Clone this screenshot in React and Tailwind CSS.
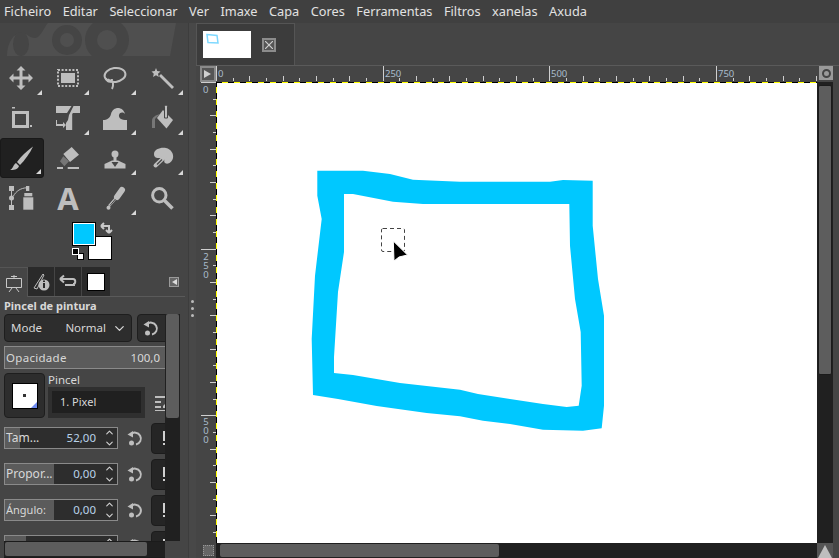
import React from "react";
import { ChevronDown, ChevronUp } from "lucide-react";

const MENU = ["Ficheiro", "Editar", "Seleccionar", "Ver", "Imaxe", "Capa", "Cores", "Ferramentas", "Filtros", "xanelas", "Axuda"];
const ICON = "#bebebe";

const Corner = () => (
  <svg width="5" height="5" viewBox="0 0 5 5" className="absolute right-[2px] bottom-[3px]">
    <path d="M5 0V5H0Z" fill="#d8d8d8" />
  </svg>
);

// toolbox glyphs, all drawn on a 26x26 box
const tools = [
  { c: 1, d: <path d="M13 1l4.500 4.500H14.500V11.500H20.500V8.500L25 13l-4.500 4.500V14.500H14.500V20.500H17.500L13 25l-4.500-4.500H11.500V14.500H5.500V17.500L1 13l4.500-4.500V11.500H11.500V5.500H8.500z" fill={ICON} /> },
  { c: 1, d: <><rect x="6" y="8" width="14" height="10" fill={ICON} /><rect x="3" y="5" width="20" height="16" fill="none" stroke={ICON} strokeWidth="2" strokeDasharray="2 1.600" /></> },
  { c: 1, d: <g fill="none" stroke={ICON} strokeWidth="2"><ellipse cx="13" cy="10" rx="10.500" ry="7" transform="rotate(-8 13 10)" /><path d="M4 13c0 3 3 4 5 3s3 4 1 8M6 14c1 2 4 2 4 0" /></g> },
  { c: 1, d: <g fill={ICON}><path d="M12 9l13 13-2 2L10 11z" /><path d="M7 3l1.200 3 3.300 .500-2.500 2.200 .800 3.300L7 10.300 4 12l.800-3.300L2.500 6.500 5.800 6z" /></g> },
  { c: 0, d: <g><rect x="5.500" y="7.500" width="14" height="14" fill="none" stroke={ICON} strokeWidth="3" /><path d="M4 2h3v1.500H4zM22 20h2v2h-2z" fill={ICON} /></g> },
  { c: 1, d: <g fill={ICON}><path d="M1 1h15.500L12 8H1zM18.500 1H25v7h-7l-.800 1v16H11v-7l2-3 1-5z" /><path d="M2 15v4h6v-2l3 3-3 3v-2H1v-6z" /></g> },
  { c: 1, d: <path d="M1 25V15C5 15 8 13 9 9C10 5 13 3 16 3C19 3 22 5 23 9C21 7 18 7 17 10C16.500 13 19 15 25 15V25Z" fill={ICON} /> },
  { c: 1, d: <g><path d="M3 23V16c0-4 4-6 8-7l-5 5v9z" fill="#777" /><path d="M8 13L14 5l10 10-6.500 8.500z" fill={ICON} /><path d="M15.500 1.500a1.500 1.500 0 0 1 3 0V13h-3z" fill={ICON} stroke="#454545" /></g> },
  { c: 1, active: true, d: <g fill={ICON}><path d="M25 1.500C22 8 17 15 12 20L9 17C13 11 19 6 25 1.500Z" /><path d="M8 18L11 21C10 25 5 25 2 25C5 24 5 20 8 18Z" /></g> },
  { c: 0, d: <g fill={ICON}><path d="M16.700 2L24 9.700 15 17 8.300 9z" /><path d="M8.300 11.300L14 16.300 9.300 21.300 5 16.300z" fill="#777" /><rect x="2" y="22" width="6" height="2" /><rect x="12.700" y="22" width="11.300" height="2" /></g> },
  { c: 1, d: <g fill={ICON}><circle cx="13" cy="9" r="3.500" /><rect x="11.500" y="10" width="3" height="6" /><path d="M2.500 23.500V19L10 15.500H16L23.500 19V23.500Z" /><path d="M9.500 17H16.500L13 22Z" fill="#454545" /></g> },
  { c: 1, d: <g><path d="M5 9C5 4 12 2 17 3C22 4 25 9 24 13C23 17 19 20 16 18C14 16 17 14 14 13C10 13 5 14 5 9Z" fill={ICON} /><path d="M15 12.500L6.500 20.500" stroke={ICON} strokeWidth="4" strokeLinecap="round" /><path d="M13 14.500L8 19.500" stroke="#454545" strokeWidth="1.200" /></g> },
  { c: 0, d: <g fill={ICON}><rect x="1" y="1" width="5" height="5" /><rect x="1" y="10.500" width="5" height="5" rx="2.500" /><rect x="1" y="20" width="5" height="5" /><rect x="3" y="5" width="1" height="16" /><rect x="18" y="1" width="3.300" height="5" /><rect x="16.300" y="8" width="8" height="3.300" /><rect x="15.300" y="12.300" width="10" height="12.400" /><path d="M5.300 11.300C8 6 13 3 18.700 2.800" fill="none" stroke={ICON} /></g> },
  { c: 0, text: "A" },
  { c: 1, d: <g><path d="M15 12L20 5" stroke={ICON} strokeWidth="6" strokeLinecap="round" /><path d="M14 13L7 21" stroke={ICON} strokeWidth="2.500" fill="none" /><path d="M13.500 14L8 20.500" stroke="#454545" /><circle cx="6.500" cy="22.700" r="2" fill={ICON} /></g> },
  { c: 0, d: <g fill="none" stroke={ICON}><circle cx="10.300" cy="10.300" r="6.700" strokeWidth="3" /><path d="M15.500 15.500L23.500 23.500" strokeWidth="3.500" /></g> },
];

const Reset = ({ className = "" }) => (
  <svg width="16" height="16" viewBox="0 0 16 16" className={className}>
    <path d="M3.500 4.500A6 6 0 1 1 9 14.500" fill="none" stroke={ICON} strokeWidth="2" />
    <path d="M0.500 4.500L6 1V7.500Z" fill={ICON} />
    <circle cx="4.500" cy="13" r="2.500" fill={ICON} />
  </svg>
);

const Slider = ({ label, value, fill, labelSize }) => (
  <div className="flex items-center h-[36px] shrink-0 w-[190px]">
    <div className="relative ml-[4px] w-[114px] h-[22px] border border-[#8a8a8a] bg-[#2d2d2d] flex items-center text-[#d8d8d8]">
      <div className={`h-full ${fill} bg-[#5b5b5b]`} />
      <span className={`absolute left-[1px] ${labelSize}`}>{label}</span>
      <span className="absolute right-[21px] text-[11.500px] text-[#b9d3ea]">{value}</span>
      <div className="absolute right-[2px] top-[-1px] flex flex-col text-[#d0d0d0]">
        <ChevronUp size={11} strokeWidth={2.5} />
        <ChevronDown size={11} strokeWidth={2.5} />
      </div>
    </div>
    <Reset className="ml-[9px]" />
    <div className="ml-[8px] w-[28px] h-[31px] rounded-[4px] bg-[#252525] border border-[#1c1c1c] flex flex-col items-start pl-[11px] pt-[7px] gap-[2px]">
      <div className="w-[2px] h-[10px] bg-[#d0d0d0]" />
      <div className="w-[2px] h-[2px] bg-[#d0d0d0]" />
    </div>
  </div>
);

const Toolbox = () => (
  <div className="grid grid-cols-[repeat(4,47px)] auto-rows-[40px]">
    {tools.map((t, i) => (
      <div
        key={i}
        className={`relative flex items-center justify-center w-[44px] pr-[2px] ${t.active ? "bg-[#202020] rounded-[3px] border border-[#191919]" : ""}`}
      >
        {t.text ? (
          <span className="text-[31px] font-bold leading-none text-[#bebebe]">{t.text}</span>
        ) : (
          <svg width="26" height="26" viewBox="0 0 26 26">{t.d}</svg>
        )}
        {t.c === 1 && <Corner />}
      </div>
    ))}
  </div>
);

const Colors = () => (
  <div className="flex justify-center pr-[2px] h-[49px]">
    <svg width="42" height="40" viewBox="0 0 42 40" className="mt-[4px] overflow-visible">
      <rect x="16.500" y="14.500" width="23" height="23" fill="#fff" stroke="#000" />
      <rect x="0.500" y="0.500" width="23" height="23" fill="#00c8ff" stroke="#000" />
      <rect x="1.500" y="1.500" width="21" height="21" fill="none" stroke="#fff" />
      <path d="M29 4h8v7M29 4l3-3M29 4l3 3M37 11l-3-3M37 11l3-3" fill="none" stroke="#c8c8c8" strokeWidth="2" />
      <rect x="5.500" y="31.500" width="6" height="6" fill="#fff" stroke="#000" />
      <rect x="0.500" y="26.500" width="6" height="6" fill="#000" stroke="#fff" />
    </svg>
  </div>
);

const DockTabs = () => (
  <div className="flex h-[29px] items-stretch relative">
    <div className="w-[28px] border-t border-r border-[#555] flex items-center justify-center -mb-px bg-[#454545] z-10">
      <svg width="18" height="18" viewBox="0 0 18 18" fill="none" stroke="#c8c8c8">
        <path d="M1.500 4.500h15v9h-15zM9 1v3M4 18l3-4M14 18l-3-4M6 2.500h6" />
      </svg>
    </div>
    <div className="w-[26px] bg-[#2a2a2a] flex items-center justify-center">
      <svg width="20" height="18" viewBox="0 0 20 18">
        <path d="M3 15L12 1l1 1-7 14z" fill="none" stroke="#bebebe" />
        <circle cx="13" cy="12" r="5.500" fill="#bebebe" />
        <rect x="12" y="10" width="2" height="5" fill="#2a2a2a" />
        <rect x="12" y="7.500" width="2" height="1.500" fill="#2a2a2a" />
      </svg>
    </div>
    <div className="w-[26px] ml-px bg-[#2a2a2a] flex items-center justify-center">
      <svg width="18" height="16" viewBox="0 0 18 16" fill="none" stroke="#bebebe" strokeWidth="2">
        <path d="M1 5h13c3 0 3 5 0 5M1 5l4-3.500M1 5l4 3.500M16 11H6" />
      </svg>
    </div>
    <div className="w-[28px] ml-px bg-[#2a2a2a] flex items-center justify-center">
      <div className="w-[18px] h-[18px] bg-white border border-black" />
    </div>
    <div className="flex-1 flex items-center justify-end pr-[9px]">
      <div className="w-[10px] h-[10px] border border-[#9a9a9a] flex items-center justify-center bg-[#666]">
        <div className="w-0 h-0 border-y-[3px] border-y-transparent border-r-[5px] border-r-[#ddd]" />
      </div>
    </div>
  </div>
);

const ToolOptions = () => (
  <div className="relative flex-1 min-h-0 border-t border-[#5a5a5a] mr-[3px] overflow-hidden">
    <div className="w-[165px] overflow-hidden h-full">
      <div className="text-[11px] font-bold text-[#d8d8d8] pl-[4px] pt-[1px] h-[17px] leading-[16px]">Pincel de pintura</div>
      <div className="flex w-[190px] pl-[4px] h-[28px] shrink-0">
        <div className="w-[128px] rounded-[4px] bg-[#2d2d2d] border border-[#1e1e1e] flex items-center justify-between pl-[6px] pr-[4px] text-[11.500px] text-[#d8d8d8]">
          <span>Mode</span>
          <span className="flex items-center gap-[6px]">Normal <ChevronDown size={15} strokeWidth={2} /></span>
        </div>
        <div className="ml-[5px] w-[46px] rounded-[4px] bg-[#2d2d2d] border border-[#1e1e1e] flex items-center pl-[5px]"><Reset /></div>
      </div>
      <div className="mt-[4px] ml-[4px] w-[170px] h-[23px] border border-[#8a8a8a] bg-[#5b5b5b] flex items-center justify-between pl-[1px] pr-[13px] text-[#d8d8d8]">
        <span className="text-[11.500px] tracking-[0.3px]">Opacidade</span>
        <span className="text-[11.500px]">100,0</span>
      </div>
      <div className="flex mt-[4px] pl-[4px] h-[46px] w-[190px]">
        <div className="w-[41px] h-[45px] rounded-[4px] bg-[#2d2d2d] border border-[#1e1e1e] flex items-center justify-center">
          <div className="relative w-[26px] h-[26px] bg-white border border-black flex items-center justify-center overflow-hidden">
            <div className="w-[3px] h-[3px] bg-[#333]" />
            <div className="absolute right-0 bottom-0 w-0 h-0 border-l-[6px] border-l-transparent border-b-[6px] border-b-[#6f8cf0]" />
          </div>
        </div>
        <div className="ml-[3px] w-[97px]">
          <div className="text-[11.500px] text-[#d8d8d8] leading-[14px] h-[14px]">Pincel</div>
          <div className="bg-[#2f2f2f] h-[31px] px-[4px] py-[4px]">
            <div className="bg-[#202020] h-[22px] text-[11px] text-[#d8d8d8] pl-[8px] leading-[21px]">1. Pixel</div>
          </div>
        </div>
        <svg width="16" height="16" viewBox="0 0 16 16" className="ml-[10px] mt-[22px]">
          <path d="M0 1h14v2H0zM0 6h6v2H0zM0 11h6v2H0zM0 15h14v1H0zM8 11l5-5 2 2-5 5H8z" fill="#bebebe" />
        </svg>
      </div>
      <div className="flex flex-col mt-[1px]">
        <Slider label="Tam..." value="52,00" fill="w-[15px]" labelSize="text-[12px]" />
        <Slider label="Propor..." value="0,00" fill="w-[49px]" labelSize="text-[12px]" />
        <Slider label="Ángulo:" value="0,00" fill="w-[49px]" labelSize="text-[11px]" />
        <Slider label="" value="" fill="w-[21px]" labelSize="text-[12px]" />
      </div>
    </div>

    {/* scrollbars over the clipped options */}
    <div className="absolute left-[165px] top-[17px] bottom-[17px] w-[15px] bg-[#202020]">
      <div className="w-[13px] h-[104px] ml-px bg-[#5d5d5d] rounded-[2px]" />
    </div>
    <div className="absolute left-[4px] bottom-0 w-[161px] h-[17px] bg-[#202020] border-y border-[#1b1b1b] pl-px">
      <div className="h-[14px] w-[142px] rounded-[2px] bg-[#5d5d5d]" />
    </div>
  </div>
);

const Wilber = () => (
  <svg width="169" height="33" viewBox="0 0 169 33" className="mb-[2px]">
    <path d="M0 33C0 18 8 10 14 10C20 10 22 15 28 15C34 15 38 2 41 0H169L163 33Z" fill="#4f4f4f" />
    <ellipse cx="14" cy="21" rx="8" ry="12" fill="#454545" />
    <circle cx="60" cy="17" r="15" fill="#454545" />
    <circle cx="60" cy="17" r="7" fill="#4f4f4f" />
    <circle cx="100" cy="17" r="22" fill="#454545" />
    <circle cx="100" cy="17" r="10" fill="#4f4f4f" />
  </svg>
);

const HRuler = () => {
  const ticks = [];
  for (let i = 0; i <= 36; i++) {
    const x = Math.round(i * 16.67) + 0.5;
    const h = i % 10 === 0 ? 15 : i % 2 === 0 ? 5 : 3;
    ticks.push(<line key={i} x1={x} x2={x} y1={15 - h} y2={15} stroke="#cfcfcf" />);
  }
  return (
    <svg width="601" height="15" className="block">
      {ticks}
      {[["0", 2], ["250", 169], ["500", 335], ["750", 502]].map(([t, x]) => (
        <text key={t} x={x} y={11} fontSize="9.500" fill="#a9bccb" fontFamily="Noto Sans, sans-serif">{t}</text>
      ))}
    </svg>
  );
};

const VRuler = () => {
  const ticks = [];
  for (let i = 0; i <= 28; i++) {
    const y = Math.round(i * 16.67) + 0.5;
    const h = i % 10 === 0 ? 15 : i % 2 === 0 ? 6 : 3;
    ticks.push(<line key={i} y1={y} y2={y} x1={16 - h} x2={16} stroke="#cfcfcf" />);
  }
  return (
    <svg width="16" height="460" className="block">
      {ticks}
      <g fontSize="9.500" fill="#a9bccb" fontFamily="Noto Sans, sans-serif">
        <text x={3} y={11}>0</text>
        <text x={6} y={168} className="[writing-mode:vertical-rl] [text-orientation:upright] tracking-[-4px]">250</text>
        <text x={6} y={333} className="[writing-mode:vertical-rl] [text-orientation:upright] tracking-[-4px]">500</text>
      </g>
    </svg>
  );
};

const STROKE =
  "M317.300 171.700L363 171.700L390 175L413 180.700L460 182.700L550 182.700L563 181L592.700 181.700L592.700 226.700L598 280L604 316.700L604 406.700L601.700 429.300L583 431.700L543 430.700L510 425L483 421.700L460 417.300L426.700 414L376.700 407L338 400L313 396L311.700 340L315 276.700L321.700 220L317.300 196.700Z " +
  "M344 195L353 195L393 202.700L423 205L569.300 205L570 246.700L575 300L580.700 333L581.700 386.700L578.700 406.700L566.700 408L543 405L510 400L478 395L460 390.700L400 384L353 376L334 374L334 358L338 293L344 253Z";

const Canvas = () => (
  <div className="relative flex-1 bg-white overflow-hidden">
    <div className="absolute left-0 right-0 top-0 h-[1px] bg-[repeating-linear-gradient(90deg,#000_0_6px,#ff0_6px_12px)]" />
    <div className="absolute left-0 top-0 bottom-0 w-[1px] bg-[repeating-linear-gradient(0deg,#000_0_6px,#ff0_6px_12px)]" />
    <svg width="601" height="460" viewBox="216 83 601 460" className="block">
      <path d={STROKE} fill="#00c8ff" fillRule="evenodd" />
      <rect x="381.500" y="229.500" width="23" height="23" rx="1.500" fill="none" stroke="#444" strokeDasharray="4 3" />
      <path d="M393.300 242L407.500 256L399 258L394 262Z" fill="#000" stroke="#fff" strokeWidth="1" strokeLinejoin="round" />
    </svg>
  </div>
);

const ImageWindow = () => (
  <div className="flex-1 flex flex-col min-w-0">
    <div className="h-[43px] border-b border-[#5a5a5a] flex">
      <div className="w-[99px] border-x border-t border-[#555] bg-[#3c3c3c] flex items-center pl-[6px]">
        <div className="w-[48px] h-[27px] bg-white mb-[1px]">
          <svg width="48" height="27" viewBox="0 0 48 27">
            <path d="M4 3.500l10 1 1 7.500-10-.500z" fill="none" stroke="#7fd9ff" strokeWidth="1.500" />
          </svg>
        </div>
        <div className="ml-[11px] w-[14px] h-[14px] border-2 border-[#8c8c8c] bg-[#555] flex items-center justify-center">
          <svg width="8" height="8" viewBox="0 0 8 8"><path d="M0 0l8 8M8 0l-8 8" stroke="#cfcfcf" strokeWidth="1.200" /></svg>
        </div>
      </div>
    </div>
    <div className="flex-1 min-h-0 flex flex-col pl-[4px]">
      <div className="flex h-[16px]">
        <div className="w-[16px] h-[16px] bg-[#8a8a8a] p-[2px]">
          <div className="w-full h-full bg-[#555] flex items-center pl-[2px]">
            <div className="w-0 h-0 border-y-[4px] border-y-transparent border-l-[7px] border-l-[#d0d0d0]" />
          </div>
        </div>
        <HRuler />
        <div className="w-[14px] h-[14px] ml-[2px] bg-[#9a9a9a] flex items-center justify-center">
          <div className="w-[9px] h-[9px] rounded-full border-2 border-[#444]" />
        </div>
      </div>
      <div className="flex flex-1 min-h-0">
        <VRuler />
        <Canvas />
        <div className="w-[16px] bg-[#202020] px-[1px] py-[3px]">
          <div className="h-[290px] bg-[#5d5d5d] border border-[#1b1b1b] rounded-[2px]" />
        </div>
        <div className="w-[6px]" />
      </div>
      <div className="flex h-[15px]">
        <div className="w-[16px] flex items-center justify-center">
          <div className="w-[11px] h-[11px] border border-dotted border-[#999] bg-[#666]" />
        </div>
        <div className="flex-1 bg-[#202020] pl-[4px] py-[1px]">
          <div className="w-[279px] h-full bg-[#5d5d5d] rounded-[2px]" />
        </div>
        <div className="w-[16px] bg-[#555] flex items-end justify-center">
          <div className="w-0 h-0 border-x-[7px] border-x-transparent border-b-[13px] border-b-[#bebebe]" />
        </div>
        <div className="w-[6px]" />
      </div>
    </div>
  </div>
);

export default function App() {
  return (
    <div className="w-[839px] h-[558px] overflow-hidden flex flex-col bg-[#454545] font-['Noto_Sans',sans-serif]">
      <div className="h-[23px] shrink-0 bg-[#404040] flex items-center pl-[4px] pt-[1px] gap-[11.500px] text-[12.750px] text-[#e2e2e2]">
        {MENU.map((m) => <span key={m}>{m}</span>)}
      </div>
      <div className="flex flex-1 min-h-0">
        <div className="w-[196px] shrink-0 flex">
          <div className="w-[188px] flex flex-col">
            <div className="h-[35px] pl-[7px] flex items-end"><Wilber /></div>
            <Toolbox />
            <Colors />
            <DockTabs />
            <ToolOptions />
          </div>
          <div className="flex-1 flex flex-col items-center gap-[4px] pt-[277px] bg-[#484848] border-l border-[#3d3d3d]">
            <div className="w-[3px] h-[3px] rounded-full bg-[#bbb]" />
            <div className="w-[3px] h-[3px] rounded-full bg-[#bbb]" />
            <div className="w-[3px] h-[3px] rounded-full bg-[#bbb]" />
          </div>
        </div>
        <ImageWindow />
      </div>
    </div>
  );
}
